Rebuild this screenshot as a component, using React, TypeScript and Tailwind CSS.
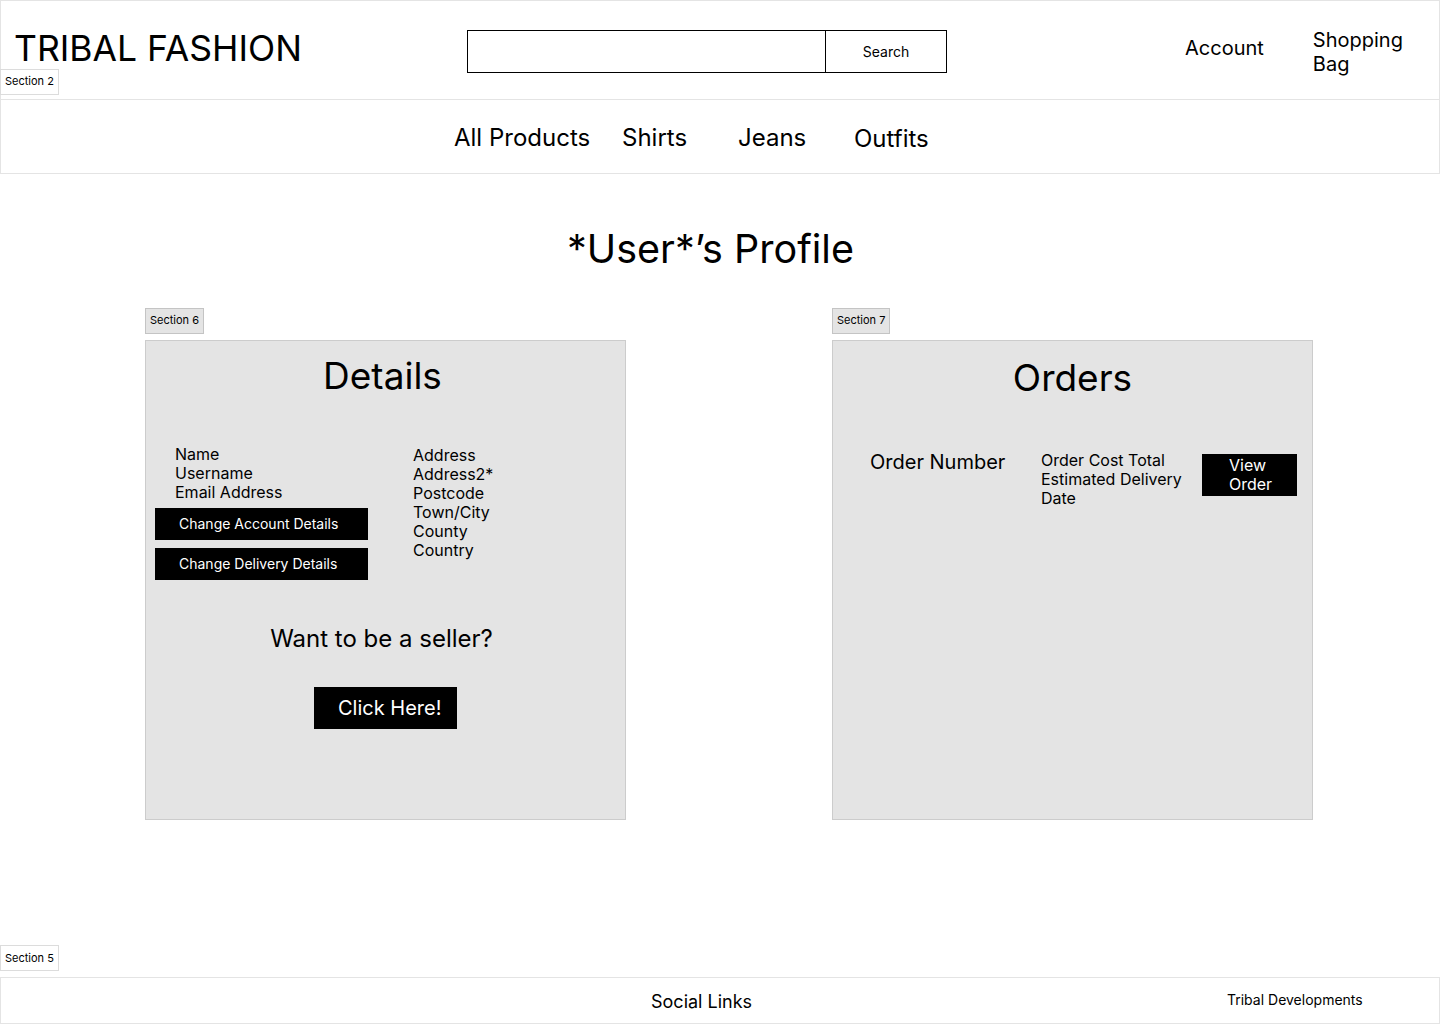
import React from "react";

function Tag({ label, gray }: { label: string; gray?: boolean }) {
  return (
    <div
      className={`inline-flex h-[26px] items-center border px-[4px] text-[11px] leading-none text-black ${
        gray ? "border-[#c4c4c4] bg-[#e4e4e4]" : "border-[#dcdcdc] bg-white"
      }`}
    >
      {label}
    </div>
  );
}

export default function App() {
  return (
    <div
      className="flex h-[1024px] w-[1440px] flex-col bg-white text-black"
      style={{ fontFamily: "Inter, 'Noto Sans', sans-serif" }}
    >
      {/* Header */}
      <header className="relative flex h-[100px] items-center border border-[#e4e4e4]">
        <div className="w-[466px] pl-[13px] text-[35.5px] leading-none -mt-[3px]">TRIBAL FASHION</div>
        <div className="mt-[3px] flex h-[43px]">
          <div className="h-full w-[359px] border border-black" />
          <button className="h-full w-[121px] border border-l-0 border-black text-[14px]">Search</button>
        </div>
        <div className="ml-[238px] -mt-[4px] text-[20px] leading-[24px]">Account</div>
        <div className="ml-[49px] mt-[4px] text-[20px] leading-[24px]">
          Shopping
          <br />
          Bag
        </div>
        <div className="absolute left-[-1px] top-[66px]">
          <Tag label="Section 2" />
        </div>
      </header>

      {/* Nav */}
      <nav className="flex h-[74px] items-center border border-t-0 border-[#e4e4e4] pl-[453px] pt-[2px] text-[24px] leading-[30px]">
        <div className="w-[168px]">All Products</div>
        <div className="w-[116px]">Shirts</div>
        <div className="w-[116px]">Jeans</div>
        <div className="mt-[2px]">Outfits</div>
      </nav>

      {/* Title */}
      <h1 className="mt-[51px] pr-[19px] text-center text-[39.5px] leading-[48px]">*User*’s Profile</h1>

      {/* Panels */}
      <div className="mt-[33px] flex gap-[206px] pl-[145px]">
        {/* Details */}
        <div className="flex flex-col">
          <div>
            <Tag label="Section 6" gray />
          </div>
          <div className="mt-[6px] flex h-[480px] w-[481px] flex-col border border-[#cccccc] bg-[#e4e4e4]">
            <div className="pt-[13px] text-center text-[37px] leading-[44px] pr-[6px]">Details</div>
            <div className="mt-[47px] flex pl-[9px]">
              <div className="w-[258px]">
                <div className="pl-[20px] text-[16px] leading-[19px]">
                  <div>Name</div>
                  <div>Username</div>
                  <div>Email Address</div>
                </div>
                <button className="mt-[6px] flex h-[32px] w-[213px] items-center bg-black pl-[24px] text-[14px] text-white">
                  Change Account Details
                </button>
                <button className="mt-[8px] flex h-[32px] w-[213px] items-center bg-black pl-[24px] text-[14px] text-white">
                  Change Delivery Details
                </button>
              </div>
              <div className="pt-[1px] text-[16px] leading-[19px]">
                <div>Address</div>
                <div>Address2*</div>
                <div>Postcode</div>
                <div>Town/City</div>
                <div>County</div>
                <div>Country</div>
              </div>
            </div>
            <div className="mt-[45px] pr-[8px] text-center text-[24px] leading-[28px]">Want to be a seller?</div>
            <div className="mt-[34px] flex justify-center">
              <button className="flex h-[42px] w-[143px] items-center bg-black pl-[24px] text-[20px] text-white">
                Click Here!
              </button>
            </div>
          </div>
        </div>

        {/* Orders */}
        <div className="flex flex-col">
          <div>
            <Tag label="Section 7" gray />
          </div>
          <div className="mt-[6px] flex h-[480px] w-[481px] flex-col border border-[#cccccc] bg-[#e4e4e4]">
            <div className="pt-[15px] text-center text-[37px] leading-[44px]">Orders</div>
            <div className="mt-[50px] flex items-start pl-[37px]">
              <div className="w-[171px] text-[20px] leading-[24px]">Order Number</div>
              <div className="w-[161px] pt-[1px] text-[16px] leading-[19px]">
                <div>Order Cost Total</div>
                <div>Estimated Delivery</div>
                <div>Date</div>
              </div>
              <button className="mt-[4px] flex h-[42px] w-[95px] items-center bg-black pl-[27px] text-left text-[16px] leading-[19px] text-white">
                <span>
                  View
                  <br />
                  Order
                </span>
              </button>
            </div>
          </div>
        </div>
      </div>

      {/* Footer */}
      <div className="mt-auto">
        <div className="mb-[6px]">
          <Tag label="Section 5" />
        </div>
        <footer className="flex h-[47px] items-center border border-[#e4e4e4] pl-[650px]">
          <div className="w-[576px] text-[18px] leading-[22px] mt-[3px]">Social Links</div>
          <div className="text-[14px] leading-[18px] -mt-[1px]">Tribal Developments</div>
        </footer>
      </div>
    </div>
  );
}
